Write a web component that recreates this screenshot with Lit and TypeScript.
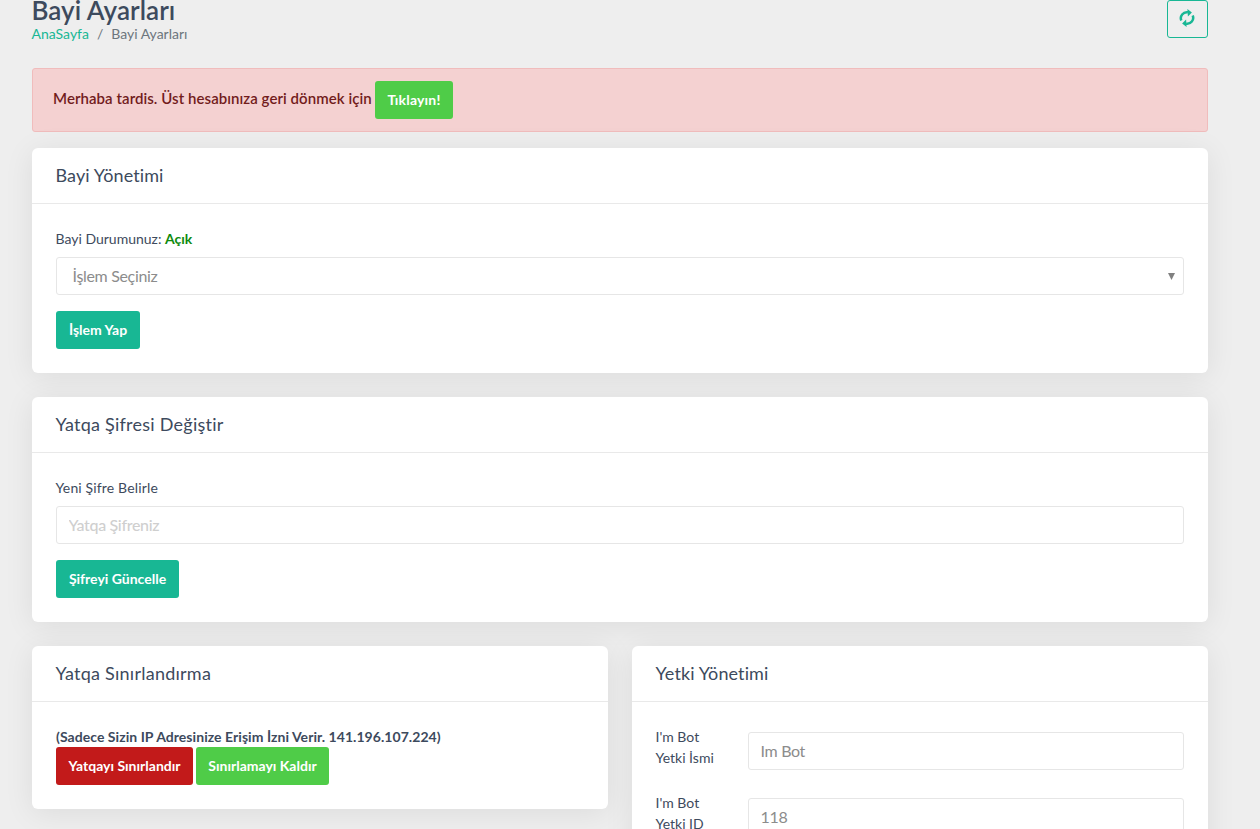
import { LitElement, html, css } from "lit";
import { customElement } from "lit/decorators.js";

@customElement("app-root")
export class AppRoot extends LitElement {
  static styles = css`
    :host {
      display: block;
      height: 829px;
      overflow: hidden;
      background: #eeeeee;
      color: #3d4a5d;
      font: 400 14px/21px Lato, sans-serif;
      font-variant-ligatures: none;
    }
    * { box-sizing: border-box; }
    .page { padding: 0 52px 0 32px; }
    .top { display: flex; justify-content: space-between; align-items: flex-start; height: 68px; }
    h1 { margin: -5px 0 0 -0.5px; font-size: 26px; line-height: 30px; font-weight: 600; letter-spacing: 0.05px; }
    .crumbs { display: flex; gap: 8px; margin: -2px 0 0 -0.5px; color: #6c757d; }
    .crumbs a { color: #18b794; }
    .refresh {
      display: flex; align-items: center; justify-content: center;
      width: 41px; height: 38px; padding: 0 1px 2px 0;
      border: 1px solid #18b794; border-radius: 3px; background: none; color: #18b794;
    }
    .alert {
      height: 64px; padding: 12px 20px; margin-bottom: 16px;
      border: 1px solid #f0bcbc; border-radius: 3px;
      background: #f4d1d1; color: #721c1c;
      font-size: 15px; font-weight: 600; line-height: 38px; letter-spacing: 0.06px;
      display: flex;
    }
    .alert span { width: 322px; margin-top: -2px; white-space: nowrap; }
    .btn {
      height: 38px; padding: 0 12px; border: 0; border-radius: 3px; color: #fff;
      font: 700 14px/38px Lato, sans-serif; white-space: nowrap; text-align: center;
      font-variant-ligatures: none;
    }
    .apply { width: 84px; }
    .update { width: 123px; }
    .limit { width: 137px; }
    .unlimit { width: 133px; }
    .click { width: 78px; letter-spacing: 0.2px; }
    .teal { background: #18b794; }
    .green { background: #4fcc48; }
    .red { background: #c21a1a; }
    .card {
      background: #fff; border-radius: 6px; margin-bottom: 24px;
      box-shadow: 0 4px 30px rgba(0, 0, 0, 0.08);
    }
    h2 {
      margin: 0; height: 56px; padding: 0 23.5px; border-bottom: 1px solid #e9e9e9;
      font-size: 18px; line-height: 55px; font-weight: 400; letter-spacing: 0.1px;
    }
    h2.wide { letter-spacing: 0.24px; }
    .label.wide { letter-spacing: 0.15px; }
    .body { padding: 24px; }
    .label { display: block; margin: 0 0 8px -0.5px; }
    .open { color: #0d8a0d; font-weight: 700; }
    .field {
      display: flex; align-items: center; justify-content: space-between;
      width: 100%; height: 38px; padding: 0 12px 2px 11.5px; border: 1px solid #e6e6e6; border-radius: 3px;
      background: #fff; color: #8c8c8c; font: 400 16px/24px Lato, sans-serif; outline: 0;
      letter-spacing: -0.33px; font-variant-ligatures: none;
    }
    .field::placeholder { color: #cfcfcf; opacity: 1; font-weight: 500; }
    .select { padding: 0 8px 0 15.5px; }
    .gap { margin-bottom: 16px; }
    .cols { display: grid; grid-template-columns: 1fr 1fr; gap: 24px; align-items: start; }
    .note { display: block; letter-spacing: 0.05px; }
    .actions { display: flex; gap: 3px; }
    .row { display: grid; grid-template-columns: 92px 1fr; height: 66px; }
    .row label { width: 68px; margin-left: -0.5px; }
    .row .field { margin-top: 6px; }
  `;

  private rows = [
    ["I'm Bot Yetki İsmi", "Im Bot"],
    ["I'm Bot Yetki ID", "118"],
  ];

  render() {
    return html`
      <div class="page">
        <header class="top">
          <div>
            <h1>Bayi Ayarları</h1>
            <nav class="crumbs"><a>AnaSayfa</a><span>/</span><span>Bayi Ayarları</span></nav>
          </div>
          <button class="refresh" aria-label="Yenile">
            <svg width="16" height="18" viewBox="0 0 16 18" fill="none" stroke="currentColor" stroke-width="2.5">
              <path d="M2.3 11.5A6 6 0 0 1 8.9 3.3M13.7 6.5A6 6 0 0 1 7.1 14.7" />
              <path d="M8.4 0L12.9 3.5L8.9 7.6ZM7.6 18L3.1 14.5L7.1 10.4Z" fill="currentColor" stroke="none" />
            </svg>
          </button>
        </header>
        <div class="alert">
          <span>Merhaba tardis. Üst hesabınıza geri dönmek için</span>
          <button class="btn green click">Tıklayın!</button>
        </div>
        <section class="card">
          <h2>Bayi Yönetimi</h2>
          <div class="body">
            <div class="label">Bayi Durumunuz: <span class="open">Açık</span></div>
            <div class="field select gap">
              <span>İşlem Seçiniz</span>
              <svg width="7" height="7" viewBox="0 0 7 7"><path d="M0 0H7L3.5 7Z" fill="#808080" /></svg>
            </div>
            <div class="actions"><button class="btn teal apply">İşlem Yap</button></div>
          </div>
        </section>
        <section class="card">
          <h2 class="wide">Yatqa Şifresi Değiştir</h2>
          <div class="body">
            <label class="label wide">Yeni Şifre Belirle</label>
            <input class="field gap" placeholder="Yatqa Şifreniz" />
            <div class="actions"><button class="btn teal update">Şifreyi Güncelle</button></div>
          </div>
        </section>
        <div class="cols">
          <section class="card">
            <h2 class="wide">Yatqa Sınırlandırma</h2>
            <div class="body">
              <b class="note">(Sadece Sizin IP Adresinize Erişim İzni Verir. 141.196.107.224)</b>
              <div class="actions">
                <button class="btn red limit">Yatqayı Sınırlandır</button>
                <button class="btn green unlimit">Sınırlamayı Kaldır</button>
              </div>
            </div>
          </section>
          <section class="card">
            <h2>Yetki Yönetimi</h2>
            <div class="body">
              ${this.rows.map(
                ([label, value]) => html`
                  <div class="row"><label>${label}</label><input class="field" .value=${value} /></div>
                `
              )}
            </div>
          </section>
        </div>
      </div>
    `;
  }
}
